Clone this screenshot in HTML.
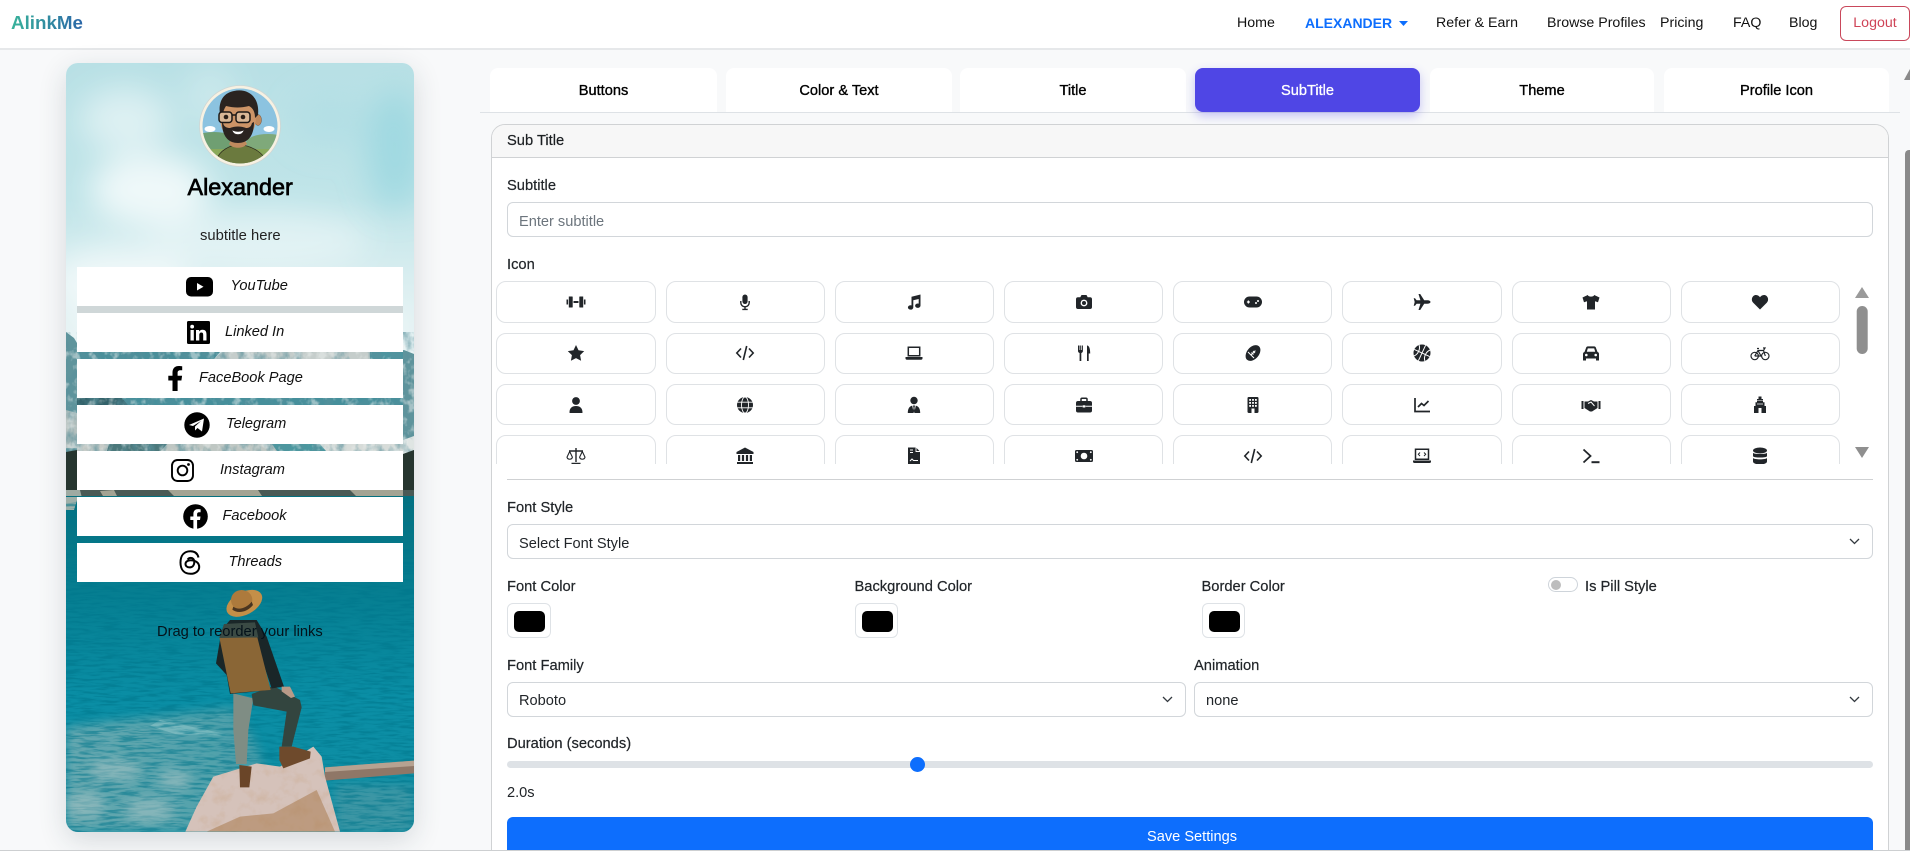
<!DOCTYPE html>
<html lang="en"><head><meta charset="utf-8"><title>AlinkMe</title>
<style>
*{box-sizing:border-box}
html,body{margin:0;padding:0;width:1910px;height:852px;overflow:hidden;background:#f8f9fa;font-family:"Liberation Sans",sans-serif;color:#212529}
#root{position:relative;width:1910px;height:852px;overflow:hidden;background:#f8f9fa}
.a{position:absolute}
.t{position:absolute;white-space:nowrap;line-height:20px;height:20px;font-size:14.6px}
nav{position:absolute;left:0;top:0;width:1910px;height:50px;background:#fff;border-bottom:2px solid #e6e8ea}
nav .t{font-size:14.2px;color:#111;top:13px}
.logo{left:11px;top:13px!important;font-size:18.8px!important;font-weight:bold;background:linear-gradient(90deg,#38b39a,#2b66a8);-webkit-background-clip:text;background-clip:text;color:transparent!important}
.tab{position:absolute;top:68px;height:44px;background:#fff;border-radius:8px 8px 0 0;text-align:center;line-height:46px;font-size:14.6px;color:#000;-webkit-text-stroke:.35px #000}
.tab.on{background:#4f46e5;color:#fff;-webkit-text-stroke:.3px #fff;border-radius:8px;box-shadow:0 4px 10px rgba(79,70,229,.3)}
.card{position:absolute;left:491px;top:124px;width:1398px;height:760px;background:#fff;border:1px solid #d0d2d4;border-radius:14px;overflow:hidden}
.card .hd{height:33px;background:#f7f7f7;border-bottom:1px solid #d0d2d4}
.lb{-webkit-text-stroke:.2px #212529;font-size:14.7px}
.ctl{position:absolute;background:#fff;border:1px solid #d2d6da;border-radius:6px}
.sw{position:absolute;top:603px;width:43.5px;height:35px;background:#fff;border:1px solid #dee2e6;border-radius:6px}
.sw i{position:absolute;left:6px;top:6.5px;width:31px;height:21px;background:#000;border-radius:5px;display:block}
.grid{position:absolute;left:496.4px;top:281.3px;width:1345px;height:182.7px;overflow:hidden;display:grid;grid-template-columns:repeat(8,159.2px);grid-auto-rows:41.3px;column-gap:10px;row-gap:10px}
.grid div{border:1px solid #dfe2e5;border-radius:10px;background:#fff;display:flex;align-items:center;justify-content:center}
.grid svg{width:20px;height:20px;fill:#212529;stroke:none}
.link{position:absolute;left:11px;width:326px;height:39px;background:#fff}
.link span{position:absolute;top:9px;font-size:14.6px;font-style:italic;line-height:20px;white-space:nowrap;color:#111}
.link svg{position:absolute}
</style></head><body><div id="root">

<svg width="0" height="0" style="position:absolute">
<defs>
<symbol id="i1" viewBox="0 0 20 20"><path d="M.5 7.5h1.6v5H.5zM2.800 4.500h3.400a.5.5 0 0 1 .5.5v10a.5.5 0 0 1-.5.5H2.800zM13.300 5a.5.5 0 0 1 .5-.5h3.400v11h-3.400a.5.5 0 0 1-.5-.5zM17.900 7.500h1.600v5h-1.600zM7.500 9h5v2h-5z"/></symbol>
<symbol id="i2" viewBox="0 0 20 20"><rect x="7.400" y="2.500" width="5.200" height="9.500" rx="2.600"/><path d="M5.800 9v1.600a4.200 4.200 0 0 0 8.400 0V9M10 15v2M7.300 17.400h5.400" fill="none" stroke="#212529" stroke-width="1.400"/></symbol>
<symbol id="i3" viewBox="0 0 20 20"><path d="M16.500 2.500 7.500 4.800v8.600a2.700 2.200 0 1 0 1.800 2V8.300l5.400-1.300v4.600a2.700 2.200 0 1 0 1.800 2z"/></symbol>
<symbol id="i4" viewBox="0 0 20 20"><path d="M7.500 3h5l1.200 2.200H16a2 2 0 0 1 2 2V15a2 2 0 0 1-2 2H4a2 2 0 0 1-2-2V7.200a2 2 0 0 1 2-2h2.300z"/><circle cx="10" cy="11" r="3.400" fill="#fff"/><circle cx="10" cy="11" r="2"/></symbol>
<symbol id="i5" viewBox="0 0 20 20"><rect x="1" y="4.500" width="18" height="11" rx="5.500"/><path d="M5.400 8.500v3M3.900 10h3" stroke="#fff" stroke-width="1.200"/><circle cx="13" cy="11" r="1" fill="#fff"/><circle cx="15" cy="9" r="1" fill="#fff"/></symbol>
<symbol id="i6" viewBox="0 0 20 20"><path d="M18.500 10c0-1-1.600-1.700-3-1.700h-3.300L8.200 2H6.500l1.900 6.300H4.600L3 6.300H1.700L2.700 10l-1 3.700H3l1.600-2h3.800L6.500 18h1.700l4-6.300h3.300c1.400 0 3-.7 3-1.700z"/></symbol>
<symbol id="i7" viewBox="0 0 20 20"><path d="M6.800 3 1.500 5.500 3 10.200l3-1V17.500h8V9.200l3 1 1.500-4.700L13.200 3c-.6 2.200-5.800 2.200-6.400 0z"/></symbol>
<symbol id="i8" viewBox="0 0 20 20"><path d="M10 17.500 3 10.500C.5 7.500 2.500 3 6 3c2 0 3.300 1.200 4 2.300C10.700 4.200 12 3 14 3c3.500 0 5.500 4.500 3 7.500z"/></symbol>
<symbol id="i9" viewBox="0 0 20 20"><path d="m10 2 2.500 5.300 5.700.8-4.100 4 1 5.700L10 15.100l-5.100 2.700 1-5.700-4.100-4 5.700-.8z"/></symbol>
<symbol id="i10" viewBox="0 0 20 20"><path d="M6 5.500 1.800 10 6 14.500M14 5.500l4.200 4.500L14 14.500M11.700 3 8.300 17" fill="none" stroke="#212529" stroke-width="1.600"/></symbol>
<symbol id="i11" viewBox="0 0 20 20"><path d="M4.300 4.300h11.400v8.400H4.300z" fill="none" stroke="#212529" stroke-width="1.500"/><path d="M1.500 14h17v1.200a1.500 1.500 0 0 1-1.500 1.500H3a1.500 1.500 0 0 1-1.500-1.500z"/></symbol>
<symbol id="i12" viewBox="0 0 20 20"><path d="M4 2.500V8c0 1 .7 1.800 1.600 2v8h1.700v-8c.9-.2 1.600-1 1.600-2V2.500h-1V7h-.7V2.500h-1V7h-.7V2.500zM13 2.500c2.500 0 3.200 4 3.200 8h-1.500V18H13z"/></symbol>
<symbol id="i13" viewBox="0 0 20 20"><ellipse cx="10" cy="10" rx="9" ry="6" transform="rotate(-50 10 10)"/><path d="M7.600 12.400l4.800-4.800M8.500 9.500l2 2M10 8l2 2M5 9l6 6" stroke="#fff" stroke-width="1" fill="none"/></symbol>
<symbol id="i14" viewBox="0 0 20 20"><circle cx="10" cy="10" r="8.500"/><path d="M10 1.500v17M1.500 10h17M4 4c3 3 3 9 0 12M16 4c-3 3-3 9 0 12" stroke="#fff" stroke-width="1" fill="none" transform="rotate(25 10 10)"/></symbol>
<symbol id="i15" viewBox="0 0 20 20"><path d="M3.500 9 5.200 4.500c.2-.6.800-1.100 1.600-1.100h6.400c.8 0 1.400.5 1.600 1.100L16.500 9c1 .3 1.500 1 1.500 2v6.500h-3v-2H5v2H2V11c0-1 .5-1.700 1.500-2z"/><path d="M5.800 8.700l1-3.300h6.400l1 3.300z" fill="#fff"/><circle cx="5.300" cy="12" r="1.300" fill="#fff"/><circle cx="14.700" cy="12" r="1.300" fill="#fff"/></symbol>
<symbol id="i16" viewBox="0 0 20 20"><g fill="none" stroke="#212529" stroke-width="1.200"><circle cx="4.700" cy="13" r="3.700"/><circle cx="15.300" cy="13" r="3.700"/><path d="M4.700 13 8 7.500h5.500l1.800 5.500M8 7.500l3 5.500H4.700M13 5h2l-1.500 2.500M7 5.500h2"/></g></symbol>
<symbol id="i17" viewBox="0 0 20 20"><circle cx="10" cy="6" r="3.900"/><path d="M3.500 17.500c0-4.500 2.500-6.500 6.500-6.500s6.500 2 6.500 6.500c0 .5-.3.500-.7.500H4.200c-.4 0-.7 0-.7-.5z"/></symbol>
<symbol id="i18" viewBox="0 0 20 20"><circle cx="10" cy="10" r="8"/><g fill="none" stroke="#fff" stroke-width=".9"><ellipse cx="10" cy="10" rx="3.500" ry="8"/><path d="M2 7.200h16M2 12.800h16"/></g></symbol>
<symbol id="i19" viewBox="0 0 20 20"><circle cx="10" cy="5.500" r="3.700"/><path d="M3.800 18c0-4.200 1.500-6.800 4.400-7.400L9.700 18zM16.200 18c0-4.200-1.500-6.800-4.400-7.400L10.300 18z"/><path d="M9 10.500h2L10.500 13l.6 3L10 17.500 8.900 16l.6-3z"/></symbol>
<symbol id="i20" viewBox="0 0 20 20"><rect x="2" y="6" width="16" height="11.500" rx="2"/><path d="M7 6V4.200a1 1 0 0 1 1-1h4a1 1 0 0 1 1 1V6" fill="none" stroke="#212529" stroke-width="1.500"/><path d="M2 11.300h6.500M11.500 11.300H18" stroke="#fff" stroke-width="1"/><rect x="8.700" y="10.300" width="2.600" height="2.200" fill="#fff"/></symbol>
<symbol id="i21" viewBox="0 0 20 20"><rect x="4.500" y="2" width="11" height="16" rx="1.200"/><g fill="#fff"><rect x="6.200" y="4" width="1.800" height="1.800"/><rect x="9.100" y="4" width="1.800" height="1.800"/><rect x="12" y="4" width="1.800" height="1.800"/><rect x="6.200" y="7" width="1.800" height="1.800"/><rect x="9.100" y="7" width="1.800" height="1.800"/><rect x="12" y="7" width="1.800" height="1.800"/><rect x="6.200" y="10" width="1.800" height="1.800"/><rect x="9.100" y="10" width="1.800" height="1.800"/><rect x="12" y="10" width="1.800" height="1.800"/><rect x="8.500" y="13.500" width="3" height="4.500"/></g></symbol>
<symbol id="i22" viewBox="0 0 20 20"><path d="M3 3v13.500h15" fill="none" stroke="#212529" stroke-width="1.700"/><path d="M6 12l3.500-3.500 2.500 2L16.500 6" fill="none" stroke="#212529" stroke-width="1.700"/></symbol>
<symbol id="i23" viewBox="0 0 20 20"><path d="M.5 6h2v8h-2zM17.500 6h2v8h-2zM3.500 6.500h3.500L10 5l3 1.500h3.500V13l-5.500 3.500h-2L3.500 13z"/><path d="M7 8.500l3-1.500 3.500 4" fill="none" stroke="#fff" stroke-width="1"/></symbol>
<symbol id="i24" viewBox="0 0 20 20"><path d="M8.500 1.500h3V4h1.500v3.300h1.500V11H16v7H4v-7h1.500V7.300H7V4h1.500z"/><path d="M8.500 13h3v5h-3zM7 8.600h6v.8H7zM7 5.300h6v.5H7z" fill="#fff"/></symbol>
<symbol id="i25" viewBox="0 0 20 20"><path d="M10 2v14M5.500 17.500h9M3 5h14" stroke="#212529" stroke-width="1.400" fill="none"/><path d="M3.700 5.500 1 11.200a2.800 2.800 0 0 0 5.400 0zM16.300 5.500 13.600 11.200a2.800 2.800 0 0 0 5.400 0z" fill="none" stroke="#212529" stroke-width="1.100"/></symbol>
<symbol id="i26" viewBox="0 0 20 20"><path d="M10 1.500 18.500 6v2h-17V6zM3 9h2.200v6H3zM6.900 9h2.200v6H6.900zM10.900 9h2.200v6h-2.200zM14.800 9H17v6h-2.200zM2 16h16v2H2z"/></symbol>
<symbol id="i27" viewBox="0 0 20 20"><path d="M4 1.500h8l4 4V18.500H4z"/><path d="M12 1.500V5.500h4M6 4h3M6 6.500h3" stroke="#fff" stroke-width=".9" fill="none"/><path d="M6 15l2-2 1.500 1.500H14" stroke="#fff" stroke-width="1" fill="none"/></symbol>
<symbol id="i28" viewBox="0 0 20 20"><rect x="1" y="4" width="18" height="12" rx="1.500"/><circle cx="10" cy="10" r="3.300" fill="#fff"/><g fill="#fff"><circle cx="3.200" cy="6.200" r=".9"/><circle cx="16.800" cy="6.200" r=".9"/><circle cx="3.200" cy="13.800" r=".9"/><circle cx="16.800" cy="13.800" r=".9"/></g></symbol>
<symbol id="i30" viewBox="0 0 20 20"><path d="M3.500 3.300h13v10h-13z" fill="none" stroke="#212529" stroke-width="1.500"/><path d="M8 6.500 6.300 8.300 8 10M12 6.500l1.700 1.800L12 10" fill="none" stroke="#212529" stroke-width="1"/><path d="M1 14.500h18v1a1.500 1.500 0 0 1-1.500 1.500h-15A1.500 1.500 0 0 1 1 15.500z"/></symbol>
<symbol id="i31" viewBox="0 0 20 20"><path d="M2.500 3.500 9.500 10l-7 6.500" fill="none" stroke="#212529" stroke-width="1.800"/><path d="M10.500 16.200h8" stroke="#212529" stroke-width="2"/></symbol>
<symbol id="i32" viewBox="0 0 20 20"><ellipse cx="10" cy="4.500" rx="7" ry="3"/><path d="M3 6.700c1.500 1.800 12.500 1.800 14 0v3.500c-1.500 1.800-12.500 1.800-14 0zM3 12c1.500 1.800 12.500 1.800 14 0v3.500c0 1.700-3 3-7 3s-7-1.300-7-3z"/></symbol>
<filter id="ripple" x="0" y="0" width="100%" height="100%"><feTurbulence type="fractalNoise" baseFrequency=".05 .42" numOctaves="3" seed="7"/><feColorMatrix values="0 0 0 0 0  0 0 0 0 .18  0 0 0 0 .26  4 0 0 0 -1.750"/></filter>
<filter id="rock" x="0" y="0" width="100%" height="100%"><feTurbulence type="fractalNoise" baseFrequency=".09 .06" numOctaves="4" seed="3"/><feColorMatrix values="0 0 0 0 .1  0 0 0 0 .28  0 0 0 0 .33  3 0 0 0 -1.250"/></filter>
<filter id="snow" x="0" y="0" width="100%" height="100%"><feTurbulence type="fractalNoise" baseFrequency=".12 .1" numOctaves="3" seed="15"/><feColorMatrix values="0 0 0 0 .85  0 0 0 0 .88  0 0 0 0 .87  4 0 0 0 -2"/></filter>
<filter id="stone" x="0" y="0" width="100%" height="100%"><feTurbulence type="fractalNoise" baseFrequency=".025" numOctaves="4" seed="11"/><feColorMatrix values="0 0 0 0 .6  0 0 0 0 .42  0 0 0 0 .3  3 0 0 0 -1.400"/><feComposite operator="in" in2="SourceAlpha"/></filter>
<filter id="cloud" x="-30%" y="-30%" width="160%" height="160%"><feGaussianBlur stdDeviation="16"/></filter>
<filter id="soft" x="-30%" y="-30%" width="160%" height="160%"><feGaussianBlur stdDeviation="5"/></filter>
<linearGradient id="sky" x1="0" y1="0" x2="0" y2="1"><stop offset="0" stop-color="#b8e0e5"/><stop offset=".45" stop-color="#bfe4e8"/><stop offset=".75" stop-color="#dceff1"/><stop offset="1" stop-color="#e8f3f4"/></linearGradient>
<linearGradient id="lake" x1="0" y1="0" x2="0" y2="1"><stop offset="0" stop-color="#05707f"/><stop offset=".3" stop-color="#067f92"/><stop offset=".6" stop-color="#0a8ea5"/><stop offset="1" stop-color="#128fa4"/></linearGradient>
<linearGradient id="shal" x1="0" y1="0" x2="1" y2="0"><stop offset="0" stop-color="#7dafb3"/><stop offset=".75" stop-color="#62a6ad"/><stop offset="1" stop-color="#4d9ca8"/></linearGradient>
</defs></svg>

<nav>
<span class="t logo">AlinkMe</span>
<span class="t" style="left:1237px">Home</span>
<span class="t" style="left:1305px;color:#0d6efd;font-weight:bold;font-size:14px">ALEXANDER</span>
<svg class="a" style="left:1399px;top:21px" width="9" height="5"><path d="M0 0h9L4.500 5z" fill="#0d6efd"/></svg>
<span class="t" style="left:1436px">Refer &amp; Earn</span>
<span class="t" style="left:1547px">Browse Profiles</span>
<span class="t" style="left:1660px">Pricing</span>
<span class="t" style="left:1733px">FAQ</span>
<span class="t" style="left:1789px">Blog</span>
<div class="a" style="left:1840px;top:6px;width:70px;height:35px;border:1px solid #c9485b;border-radius:6px;text-align:center;line-height:33px;font-size:14.2px;color:#cf4457">Logout</div>
</nav>

<!-- phone preview -->
<div class="a" style="left:66px;top:63px;width:348px;height:769px;border-radius:12px;overflow:hidden;box-shadow:0 8px 28px rgba(30,50,60,.16)">
<svg class="a" style="left:0;top:0" width="348" height="769" viewBox="66 63 348 769">
<rect x="66" y="63" width="348" height="300" fill="url(#sky)"/>
<g filter="url(#cloud)" fill="#fff">
<ellipse cx="125" cy="120" rx="45" ry="32" opacity=".5"/>
<ellipse cx="150" cy="190" rx="60" ry="36" opacity=".75"/>
<ellipse cx="210" cy="95" rx="25" ry="30" opacity=".25"/>
<ellipse cx="260" cy="240" rx="110" ry="32" opacity=".4"/>
<ellipse cx="120" cy="280" rx="70" ry="34" opacity=".6"/>
<ellipse cx="240" cy="325" rx="170" ry="26" opacity=".5"/>
</g>
<g filter="url(#cloud)"><ellipse cx="395" cy="150" rx="28" ry="60" fill="#83d0dc" opacity=".5"/><ellipse cx="330" cy="120" rx="36" ry="26" fill="#a4dbe3" opacity=".35"/></g>
<!-- mountains -->
<path d="M66 332l8 6 6 10 40 4 100 6 60 0 60-4 40 0 24-4 10 4V500H66z" fill="#5f949c"/>
<path d="M66 410l14 4v34H66z" fill="#b3bfbd"/>
<path d="M403 440l11-4v14l-11 4z" fill="#dfe5e3"/>
<!-- gap detail -->
<path d="M77 352h143l-6 7H77z" fill="#4a8f9a"/><path d="M214 359l8-7h148v7z" fill="#c5cdcb"/><path d="M370 352h33v7h-33z" fill="#4d949f"/>
<path d="M77 398h45l6 7H77z" fill="#33626a"/><path d="M122 398h281v7H128z" fill="#468f9b"/>
<path d="M77 444h32l-2 7H77z" fill="#c7ccc8"/><path d="M109 444h58l-6 7h-54z" fill="#4b787b"/><path d="M167 444h105l5 7H161z" fill="#bfc7c3"/><path d="M272 444h48l6 7h-49z" fill="#4b979f"/><path d="M320 444h83v7h-77z" fill="#d7dcd9"/>
<rect x="66" y="332" width="348" height="165" filter="url(#rock)" opacity=".65"/>
<rect x="66" y="345" width="348" height="110" filter="url(#snow)" opacity=".5"/>
<path d="M66 452l11-2v42H66zM403 454l11-4v40h-11z" fill="#26352f"/>
<path d="M66 490h348v6H66z" fill="#4a5a55"/>
<path d="M100 491l14-1 3 6h-14zM168 490h90l4 6h-88zM350 490h53v6h-47z" fill="#a3a393"/>
<path d="M66 490h14l2 8H66z" fill="#9eaaa2"/>
<!-- lake -->
<rect x="66" y="496" width="348" height="336" fill="url(#lake)"/>
<path d="M66 497h12l-4 13H66z" fill="#9fb0aa"/>
<path d="M66 728c50-8 100-12 165-20 20 20 40 50 40 124H66z" fill="url(#shal)" opacity=".8" filter="url(#soft)"/>
<path d="M335 785h79v47h-79z" fill="#4f9aa5" opacity=".7" filter="url(#soft)"/>
<path d="M160 720l75 16-60-2-25-8z" fill="#8ec5c8" opacity=".6"/>
<rect x="66" y="500" width="348" height="332" filter="url(#ripple)" opacity=".55"/>
<g fill="#a9c4c4" opacity=".55" filter="url(#soft)"><ellipse cx="85" cy="805" rx="20" ry="12"/><ellipse cx="150" cy="810" rx="26" ry="12"/><ellipse cx="115" cy="770" rx="26" ry="10"/><ellipse cx="175" cy="780" rx="16" ry="10"/></g>
<!-- figure, coordinates from a 3x grid -->
<g transform="translate(0 430) scale(.33333)">
<path d="M975 1012 1242 992V1030L975 1052z" fill="#8f7767"/>
<path d="M975 1012 1242 992V1008L975 1026z" fill="#b6a291"/>
<path d="M556 1205 590 1130 640 1040 770 1000 840 1010 940 950 965 980 975 1040 1020 1205z" fill="#d5c2ba"/>
<path d="M556 1205 590 1130 640 1040 770 1000 840 1010 940 950 965 980 975 1040 1020 1205z" filter="url(#stone)" opacity=".45"/>
<path d="M620 1205 720 1160 820 1150 950 1080 1005 1205z" fill="#a97c50" opacity=".55"/>
<path d="M700 790 760 805 745 900 740 1002 708 1002 700 900z" fill="#7f8d84"/>
<path d="M755 792 820 768 900 810 905 832 875 950 845 950 860 845 760 826z" fill="#33453f"/>
<path d="M718 1005 755 1010 748 1072 720 1072z" fill="#6a4528"/>
<path d="M838 950 880 950 932 965 930 985 850 1015 838 990z" fill="#6e4a2c"/>
<path d="M665 600 690 570 770 570 800 620 852 770 815 775 790 700 810 780 690 792 680 735 648 700z" fill="#1a2628"/>
<path d="M658 622 772 622 812 780 692 790z" fill="#8a6636"/>
<path d="M672 582 765 577 775 622 658 624z" fill="#3a4a44"/>
<path d="M845 770l25 0 15 30-12 4-28-20z" fill="#b89a88"/>
<ellipse cx="733" cy="520" rx="58" ry="34" transform="rotate(-28 733 520)" fill="#c48f48"/>
<ellipse cx="725" cy="510" rx="32" ry="30" fill="#ad7a3c"/>
<path d="M700 530c15 12 40 5 55-15l4 10c-15 20-45 28-62 14z" fill="#4a3520"/>
</g>
<!-- button shadows -->
<rect x="77" y="306" width="326" height="7" fill="#cfd7d8"/>
<!-- avatar -->
<defs><clipPath id="av"><circle cx="240" cy="126" r="37.5"/></clipPath></defs>
<circle cx="240" cy="126" r="40.5" fill="#f7f1e2" stroke="#cfd6d4" stroke-width=".8"/>
<g clip-path="url(#av)">
<rect x="200" y="88" width="80" height="80" fill="#8cc3e0"/>
<ellipse cx="210" cy="129" rx="5.500" ry="3" fill="#fff"/><ellipse cx="269" cy="129" rx="5.500" ry="3" fill="#fff"/>
<ellipse cx="214" cy="144" rx="26" ry="12" fill="#6f9f72"/><ellipse cx="268" cy="143" rx="22" ry="9" fill="#7fa97a"/>
<rect x="200" y="149" width="80" height="20" fill="#8aa95a"/>
<path d="M215 168c0-14 10-21 23-24 14 2 29 9 30 24z" fill="#6b7a3e" stroke="#2c2a1c" stroke-width=".7"/>
<path d="M229 144c4 5 14 5 18 0l-3-6h-12z" fill="#c08a5e"/>
<ellipse cx="258" cy="120" rx="3.500" ry="5.500" fill="#c08a5e" stroke="#6a4228" stroke-width=".4"/>
<ellipse cx="238" cy="118" rx="18" ry="23" fill="#cd9467"/>
<path d="M222 122c0 14 6 21 16 21s16-7 16-21l-2 1c-1 4-3 5-6 5-5-2-11-2-16 0-3 0-6-1-7-5z" fill="#2a2320"/>
<path d="M232 130c4 2 8 2 12 0-1 3-3 4.500-6 4.500s-5-1.500-6-4.500z" fill="#fff" stroke="#2a2320" stroke-width=".5"/>
<path d="M220 115c-2-13 3-22 14-24 13-3 26 5 24 24l-3 3c0-6-2-10-6-12-8 2-15 2-23 0-2 3-3 6-3 9z" fill="#2a2320"/>
<g fill="#d9b796" stroke="#1d1917" stroke-width="1.500"><rect x="219" y="112" width="13" height="10.500" rx="3"/><rect x="236" y="112" width="14" height="10.500" rx="3"/></g>
<path d="M232 115h4" stroke="#1d1917" stroke-width="1.400"/>
<circle cx="226" cy="117" r="2.300" fill="#2a1f18"/><circle cx="243" cy="117" r="2.300" fill="#2a1f18"/>
</g>
</svg>
<span class="t" style="left:121.5px;top:114px;font-size:23.4px;line-height:20px;color:#000;-webkit-text-stroke:.7px #000">Alexander</span>
<span class="t" style="left:134px;top:162.5px;font-size:14.8px;color:#222">subtitle here</span>
<div class="link" style="top:204px"><svg style="left:109px;top:9.5px" width="27" height="20" viewBox="0 0 27 20"><rect width="27" height="19.500" rx="5"/><path d="M11 6v7.500l6.500-3.750z" fill="#fff"/></svg><span style="left:153.5px">YouTube</span></div>
<div class="link" style="top:250px"><svg style="left:110px;top:7.5px" width="23" height="23" viewBox="0 0 23 23"><rect width="23" height="23" rx="1.500"/><path d="M3.500 9h3.300v10.500H3.500zM5.150 3.700a1.900 1.900 0 1 1 0 3.800 1.900 1.900 0 0 1 0-3.800zM9 9h3.100v1.500c.6-1 1.800-1.800 3.400-1.800 3.200 0 4 2.100 4 4.900v5.900h-3.300v-5.200c0-1.300-.1-2.800-1.800-2.800s-2.100 1.300-2.100 2.700v5.300H9z" fill="#fff"/></svg><span style="left:148px">Linked In</span></div>
<div class="link" style="top:296px"><svg style="left:91px;top:6.7px" width="15" height="25" viewBox="0 0 15 25"><path d="M4.500 25V14.500H.3V9.800h4.200V6.500C4.500 2.300 7 0 10.700 0c1.700 0 3.500.3 3.500.3v4h-2c-1.900 0-2.600 1.200-2.600 2.500v3h4.500l-.7 4.700H9.600V25z"/></svg><span style="left:122px">FaceBook Page</span></div>
<div class="link" style="top:342px"><svg style="left:107.3px;top:6.5px" width="26" height="26" viewBox="0 0 26 26"><circle cx="13" cy="13" r="12.700"/><path d="M5 13 20 6.500 18 19.500 13.500 16 11 18.500V14.500L17 9 9 14z" fill="#fff"/></svg><span style="left:149px">Telegram</span></div>
<div class="link" style="top:388px"><svg style="left:94px;top:8px" width="23" height="23" viewBox="0 0 23 23"><rect x="1" y="1" width="21" height="21" rx="5.500" fill="none" stroke="#000" stroke-width="1.900"/><circle cx="11.500" cy="11.500" r="4.800" fill="none" stroke="#000" stroke-width="1.900"/><circle cx="17.500" cy="5.500" r="1.400"/></svg><span style="left:143px">Instagram</span></div>
<div class="link" style="top:434px"><svg style="left:106px;top:7px" width="25" height="25" viewBox="0 0 25 25"><circle cx="12.500" cy="12.500" r="12.300"/><path d="M10.400 25V16H7.300v-3.500h3.100V9.800c0-3 1.800-4.700 4.500-4.700 1.300 0 2.700.2 2.700.2v3h-1.500c-1.500 0-2 .9-2 1.900v2.300h3.400l-.5 3.500h-2.900v9z" fill="#fff"/></svg><span style="left:145.5px">Facebook</span></div>
<div class="link" style="top:480px"><svg style="left:101.5px;top:7px" width="22" height="25" viewBox="0 0 22 25"><path d="M19.500 7.500C18.500 3 15.500 1.200 11.500 1.200 5 1.200 1.500 5.500 1.500 12.500s3.500 11.300 10 11.300c5 0 8.700-2.800 8.700-6.800 0-4.500-4-6.800-8.500-6.800-3.200 0-5.200 1.700-5.200 3.800s1.900 3.400 4 3.400c2.700 0 4.800-1.800 4.800-5.500 0-2.500-1.300-4-3.400-4-1.500 0-2.600.6-3.300 1.700" fill="none" stroke="#000" stroke-width="2"/></svg><span style="left:151.5px">Threads</span></div>
<span class="t" style="left:91px;top:558.5px;font-size:14.7px;color:#04121a">Drag to reorder your links</span>
</div>

<!-- tabs -->
<div class="a" style="left:480px;top:112px;width:1420px;height:1px;background:#dee2e6"></div>
<div class="tab" style="left:490px;width:227px">Buttons</div>
<div class="tab" style="left:726px;width:226px">Color &amp; Text</div>
<div class="tab" style="left:960px;width:226px">Title</div>
<div class="tab on" style="left:1195px;width:225px">SubTitle</div>
<div class="tab" style="left:1430px;width:224px">Theme</div>
<div class="tab" style="left:1664px;width:225px">Profile Icon</div>

<!-- card -->
<div class="card"><div class="hd"></div></div>
<span class="t lb" style="left:507px;top:131px;color:#1c1f22">Sub Title</span>
<span class="t lb" style="left:507px;top:175.5px">Subtitle</span>
<div class="ctl" style="left:507px;top:202px;width:1366px;height:35px"></div>
<span class="t" style="left:519px;top:211.5px;color:#6c757d">Enter subtitle</span>
<span class="t lb" style="left:507px;top:254.5px">Icon</span>

<div class="grid">
<div><svg><use href="#i1"/></svg></div><div><svg><use href="#i2"/></svg></div><div><svg><use href="#i3"/></svg></div><div><svg><use href="#i4"/></svg></div><div><svg><use href="#i5"/></svg></div><div><svg><use href="#i6"/></svg></div><div><svg><use href="#i7"/></svg></div><div><svg><use href="#i8"/></svg></div>
<div><svg><use href="#i9"/></svg></div><div><svg><use href="#i10"/></svg></div><div><svg><use href="#i11"/></svg></div><div><svg><use href="#i12"/></svg></div><div><svg><use href="#i13"/></svg></div><div><svg><use href="#i14"/></svg></div><div><svg><use href="#i15"/></svg></div><div><svg><use href="#i16"/></svg></div>
<div><svg><use href="#i17"/></svg></div><div><svg><use href="#i18"/></svg></div><div><svg><use href="#i19"/></svg></div><div><svg><use href="#i20"/></svg></div><div><svg><use href="#i21"/></svg></div><div><svg><use href="#i22"/></svg></div><div><svg><use href="#i23"/></svg></div><div><svg><use href="#i24"/></svg></div>
<div><svg><use href="#i25"/></svg></div><div><svg><use href="#i26"/></svg></div><div><svg><use href="#i27"/></svg></div><div><svg><use href="#i28"/></svg></div><div><svg><use href="#i10"/></svg></div><div><svg><use href="#i30"/></svg></div><div><svg><use href="#i31"/></svg></div><div><svg><use href="#i32"/></svg></div>
</div>

<!-- inner scrollbar -->
<svg class="a" style="left:1855px;top:286px" width="14" height="174" viewBox="0 0 14 174"><path d="M7 1 14 12H0z" fill="#9a9a9a"/><rect x="1.700" y="20" width="11" height="48" rx="5.500" fill="#8f8f8f"/><path d="M0 161H14L7 172z" fill="#8f8f8f"/></svg>

<div class="a" style="left:507px;top:479px;width:1366px;height:1px;background:#cfd1d3"></div>

<span class="t lb" style="left:507px;top:498px">Font Style</span>
<div class="ctl" style="left:507px;top:524px;width:1366px;height:35px"></div>
<span class="t" style="left:519px;top:534px">Select Font Style</span>
<svg class="a" style="left:1849px;top:538px" width="11" height="7"><path d="M1 1l4.500 4.500L10 1" fill="none" stroke="#343a40" stroke-width="1.300"/></svg>

<span class="t lb" style="left:507px;top:577px">Font Color</span>
<span class="t lb" style="left:854.5px;top:577px">Background Color</span>
<span class="t lb" style="left:1201.5px;top:577px">Border Color</span>
<div class="sw" style="left:507px"><i></i></div>
<div class="sw" style="left:854.5px"><i></i></div>
<div class="sw" style="left:1201.5px"><i></i></div>
<div class="a" style="left:1548px;top:577px;width:30px;height:15px;border:1px solid #ced4da;border-radius:8px;background:#fff"></div>
<div class="a" style="left:1550.5px;top:580px;width:10px;height:10px;border-radius:50%;background:#bdbdbd"></div>
<span class="t lb" style="left:1585px;top:577px">Is Pill Style</span>

<span class="t lb" style="left:507px;top:656px">Font Family</span>
<span class="t lb" style="left:1194px;top:656px">Animation</span>
<div class="ctl" style="left:507px;top:682px;width:679px;height:35px"></div>
<span class="t" style="left:519px;top:691px">Roboto</span>
<svg class="a" style="left:1162px;top:696px" width="11" height="7"><path d="M1 1l4.500 4.500L10 1" fill="none" stroke="#343a40" stroke-width="1.300"/></svg>
<div class="ctl" style="left:1194px;top:682px;width:679px;height:35px"></div>
<span class="t" style="left:1206px;top:691px">none</span>
<svg class="a" style="left:1849px;top:696px" width="11" height="7"><path d="M1 1l4.500 4.500L10 1" fill="none" stroke="#343a40" stroke-width="1.300"/></svg>

<span class="t lb" style="left:507px;top:734px">Duration (seconds)</span>
<div class="a" style="left:507px;top:761px;width:1366px;height:7px;background:#dee2e6;border-radius:4px"></div>
<div class="a" style="left:910px;top:757px;width:15px;height:15px;background:#0d6efd;border-radius:50%"></div>
<span class="t" style="left:507px;top:783px">2.0s</span>

<div class="a" style="left:507px;top:817px;width:1366px;height:40px;background:#0d6efd;border-radius:6px"></div>
<span class="t" style="left:1147px;top:826.5px;color:#fff">Save Settings</span>

<!-- page scrollbar -->
<svg class="a" style="left:1904px;top:68px" width="6" height="13"><path d="M6 1V12H0z" fill="#8a8a8a"/></svg>
<div class="a" style="left:1905px;top:150px;width:5px;height:702px;background:#8a8a8a;border-radius:4px 0 0 0"></div>

<!-- bottom edge -->
<div class="a" style="left:0;top:850px;width:1910px;height:2px;background:#fff;border-top:1px solid #cdcfd1"></div>
</div></body></html>
